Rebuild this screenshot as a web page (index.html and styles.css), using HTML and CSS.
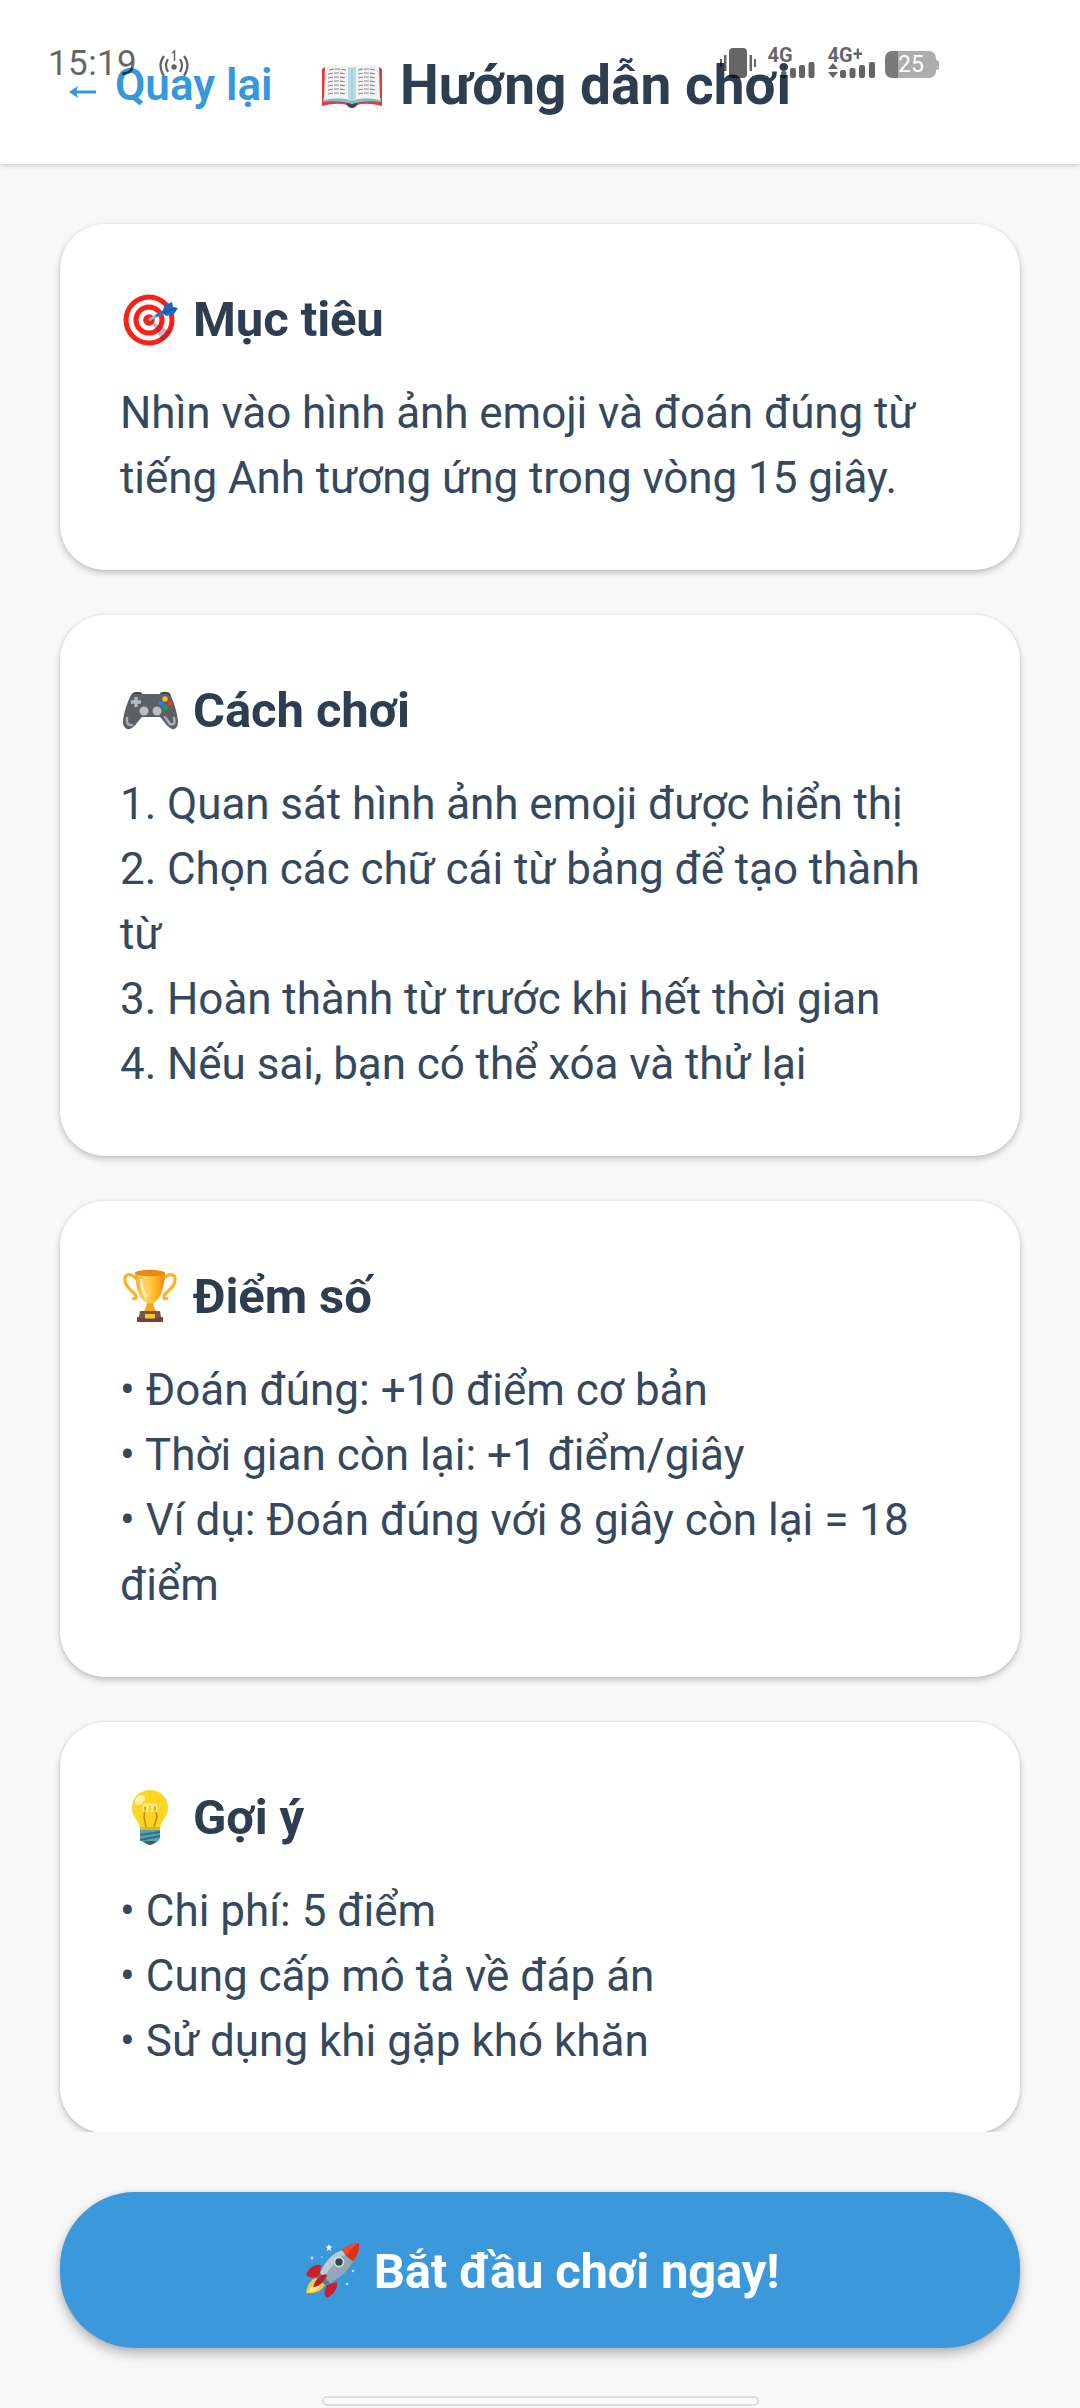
FILE: index.html
```html
<!DOCTYPE html>
<html lang="vi">
<head>
<meta charset="utf-8">
<title>Hướng dẫn chơi</title>
<link rel="stylesheet" href="styles.css">
</head>
<body>
<div class="screen">
  <header class="header">
    <a class="back"><svg class="arrow" viewBox="0 0 27 12"><path d="M0 6 9 0 7.500 4.400H27V7.600H7.500L9 12Z" fill="#3498db"/></svg><span>Quay lại</span></a>
    <h1 class="title"><svg class="book" viewBox="0 0 62 44">
      <path d="M1 5 4 3V37H58V3L61 5V42Q46 38 36 41Q31 46 26 41Q16 38 1 42Z" fill="#e53935"/>
      <path d="M2 34 9 32H53L60 34V38Q45 36 35 39Q31 43 27 39Q17 36 2 38Z" fill="#7dbccb"/>
      <path d="M4 2Q22-1 31 4V37Q20 32 3 36Z" fill="#f5f5f5"/><path d="M31 4Q40-1 58 2L59 36Q42 32 31 37Z" fill="#f1f3f4"/>
      <path d="M27 2.500 31 4 35 2.500V35L31 37 27 35Z" fill="#b9dbe6"/><path d="M31 4V37" stroke="#8bb7c6" stroke-width=".8"/>
      <path d="M8 6q8-2 17 0M7 10q9-2 18 0M7 14q9-2 18 0M7 18q9-2 18 0M7 22q9-2 18 0M7 26q9-2 18 0M7 30q9-2 18 0M37 6q8-2 17 0M37 10q9-2 18 0M37 14q9-2 18 0M37 18q9-2 18 0M37 22q9-2 18 0M37 26q9-2 18 0M37 30q9-2 18 0" fill="none" stroke="#8d8d8d" stroke-width="1.100" stroke-dasharray="5 1"/>
      <path d="M25 39Q31 39 31 41Q31 39 37 39Q35 44 31 44Q27 44 25 39Z" fill="#424242"/>
    </svg><span>Hướng dẫn chơi</span></h1>
  </header>

  <main class="content">
    <section class="card">
      <h2><svg class="emoji" viewBox="0 0 56 56">
        <circle cx="27" cy="29" r="25.500" fill="#fb1f18"/><circle cx="27" cy="29" r="20.500" fill="#fff"/><circle cx="27" cy="29" r="15.500" fill="#fb1f18"/><circle cx="27" cy="29" r="10.500" fill="#fff"/><circle cx="27" cy="29" r="5.800" fill="#ee2724"/>
        <path d="M29 30 49 41Q46 47 40 50Z" fill="#7a1f3c" opacity=".35"/>
        <path d="M27 29 43 20" stroke="#9fb3bd" stroke-width="3"/><path d="M34 25 43 20" stroke="#1976d2" stroke-width="3"/>
        <path d="M40 21 43 14 50 11 51 16 56 17 52 23 44 25Z" fill="#0b6dc9"/><path d="M41 22 54 17" stroke="#0a4f9c"/>
      </svg><span>Mục tiêu</span></h2>
      <p class="narrow">Nhìn vào hình ảnh emoji và đoán đúng từ tiếng Anh tương ứng trong vòng 15 giây.</p>
    </section>

    <section class="card">
      <h2><svg class="emoji" viewBox="0 0 56 56">
        <path d="M9 15Q9 10 15 10H17Q20 10 20 12H38Q38 10 41 10H44Q49 10 49 15Z" fill="#37474f"/>
        <path d="M9 13Q12 11 17 12H41Q46 11 49 14C53 23 56 34 56 41Q55 48 50 47C45 45 42 39 38 35H20C16 39 13 45 8 47Q2 48 1 41C1 34 4 23 9 13Z" fill="#596167"/>
        <path d="M5 36Q4 44 10 43M52 36Q54 44 48 42L43 35" fill="none" stroke="#a9aeb1" stroke-width="2.500" stroke-linecap="round"/>
        <path d="M14 15v10M9 20h10" stroke="#b7bbbd" stroke-width="3.300"/>
        <circle cx="22" cy="29" r="4.500" fill="#bdbdbd"/><circle cx="35" cy="29" r="4.500" fill="#bdbdbd"/>
        <circle cx="43" cy="17" r="2.700" fill="#ffc107"/><circle cx="39" cy="21" r="2.500" fill="#2979ff"/><circle cx="48" cy="21" r="2.500" fill="#e53935"/><circle cx="43" cy="25" r="2.600" fill="#18a153"/>
      </svg><span>Cách chơi</span></h2>
      <p class="narrow">1. Quan sát hình ảnh emoji được hiển thị<br>2. Chọn các chữ cái từ bảng để tạo thành từ<br>3. Hoàn thành từ trước khi hết thời gian<br>4. Nếu sai, bạn có thể xóa và thử lại</p>
    </section>

    <section class="card">
      <h2><svg class="emoji" viewBox="0 0 56 56">
        <defs><linearGradient id="gold"><stop stop-color="#f9a825"/><stop offset=".35" stop-color="#ffd36b"/><stop offset=".6" stop-color="#ffc12e"/><stop offset="1" stop-color="#f08c0a"/></linearGradient></defs>
        <path d="M15 11C8 4 2 6 3 13C4 21 12 23 14 28Q15 32 10 30M41 11C48 4 54 6 53 13C52 21 44 23 42 28Q41 32 46 30" fill="none" stroke="#fbb323" stroke-width="3.200"/>
        <path d="M25 32H31Q31 40 35 44H21Q25 40 25 32Z" fill="#f5a51c"/>
        <path d="M13 5Q14 27 23 34Q28 37 33 34Q42 27 43 5Z" fill="url(#gold)"/>
        <ellipse cx="28" cy="5" rx="15" ry="3.200" fill="#e58b13"/><path d="M19 11Q20 23 24 29" stroke="#ffedb1" stroke-width="3" fill="none"/>
        <path d="M18 43H38L39 49H41V54H15V49H17Z" fill="#795548"/><path d="M15 50H41V54H15Z" fill="#68463c"/><rect x="23" y="46" width="10" height="4.500" fill="#fcc23b"/>
      </svg><span>Điểm số</span></h2>
      <p>• Đoán đúng: +10 điểm cơ bản<br>• Thời gian còn lại: +1 điểm/giây<br>• Ví dụ: Đoán đúng với 8 giây còn lại = 18 điểm</p>
    </section>

    <section class="card">
      <h2><svg class="emoji" viewBox="0 0 56 56">
        <path d="M28 1C17 1 10 9 10 19C10 28 16 30 18 39H38C40 30 46 28 46 19C46 9 39 1 28 1Z" fill="#fdd522"/>
        <path d="M24 38 22 28 23 18M32 38 35 28 33 18" fill="none" stroke="#c98a0a" stroke-width="1.600"/>
        <path d="M22 23Q20 15 23 15T25 23Q25 15 28 15T30 23Q30 15 33 15T34 23" fill="none" stroke="#fff0a0" stroke-width="1.700"/>
        <ellipse cx="18" cy="11" rx="6" ry="4" fill="#fff0a3" transform="rotate(-42 18 11)"/>
        <path d="M18 38H38V49Q36 55 28 55T18 49Z" fill="#5c9eb1"/><path d="M18 38H38V41H18Z" fill="#d8b53b"/><path d="M18 46 38 43M18 51 38 47" stroke="#306f84" stroke-width="1.800"/><path d="M22 52H34Q31 56 28 56T22 52Z" fill="#455a64"/>
      </svg><span>Gợi ý</span></h2>
      <p>• Chi phí: 5 điểm<br>• Cung cấp mô tả về đáp án<br>• Sử dụng khi gặp khó khăn</p>
    </section>
  </main>

  <footer class="footer">
    <button class="start"><svg class="emoji" viewBox="0 0 56 56">
      <path d="M17 23Q7 21 2 33Q7 38 16 34ZM33 40Q34 50 23 56Q18 52 23 43Z" fill="#c9202b"/>
      <path d="M12 36Q4 38 2 51Q15 53 21 43Z" fill="#f9c846"/><path d="M11 41Q7 43 5 50Q13 49 16 44Z" fill="#fff08a"/>
      <path d="M40 8Q25 11 16 31L26 41Q45 31 50 17Z" fill="#90a9b5"/><path d="M40 8Q25 11 16 31L20 35Q32 17 43 11Z" fill="#b8ccd4"/><path d="M16 31 26 41 22 43 14 35Z" fill="#607d8b"/>
      <path d="M38 8Q46 1 55 1Q56 11 49 19Q44 17 38 8Z" fill="#dc3019"/><path d="M38 8Q46 1 55 1Q47 6 43 13Z" fill="#f04b31"/>
      <circle cx="35" cy="20" r="5.300" fill="#d5dfe3"/><circle cx="35" cy="20" r="3.700" fill="#37474f"/>
      <path d="M22 32Q12 34 9 45Q16 46 23 34Z" fill="#bd1e2b"/>
      <path d="m25 2 1 2.400 2.500.2-2 1.700.7 2.600L25 7.500l-2.200 1.400.7-2.600-2-1.700 2.500-.2Z" fill="#fff"/><circle cx="8" cy="16" r="1.400" fill="#bde7ff"/><circle cx="49" cy="29" r="1.300" fill="#bde7ff"/><circle cx="43" cy="42" r="1.300" fill="#bde7ff"/><circle cx="18" cy="15" r=".8" fill="#bde7ff"/>
    </svg><span>Bắt đầu chơi ngay!</span></button>
    <div class="home-bar"></div>
  </footer>

  <div class="status">
    <span class="clock">15:19</span>
    <svg class="hotspot" viewBox="0 0 32 30"><g fill="none" stroke="#000" stroke-width="2.200"><path d="M10 10Q6 16 10 23M6 7Q-1 16 6 27M22 10Q26 16 22 23M26 7Q33 16 26 27"/><path d="M14 4 16.500 2V12" stroke-width="1.500"/></g><circle cx="16" cy="18" r="2.700"/></svg>
    <svg class="indicators" viewBox="0 0 220 32">
      <rect x="9" y="1" width="18" height="30" rx="4"/><path d="M0 12h2v8h-2zM4 8h2.500v16H4zM29.500 8H32v16h-2.500zM34 12h2v8h-2z"/>
      <text class="net" x="47.500" y="15">4G</text><rect x="61" y="24" width="5.500" height="7" rx="2"/><rect x="70" y="21" width="6" height="10" rx="2"/><rect x="79" y="18" width="6" height="13" rx="2"/><rect x="88.500" y="15" width="6" height="16" rx="2"/>
      <text class="net" x="107.500" y="15">4G</text><path d="M133.500 5.500h3.200V1.500h2.200v4h3.200v2.400h-3.200v4h-2.200v-4h-3.200z"/><path d="m108 22 5-6 5 6zM108 25h10l-5 6z"/><rect x="120" y="23" width="6" height="8" rx="2"/><rect x="129.500" y="21" width="6" height="10" rx="2"/><rect x="139" y="18" width="6" height="13" rx="2"/><rect x="149" y="15" width="6" height="16" rx="2"/>
    </svg>
    <div class="battery"><span>25</span></div>
  </div>
</div>
</body>
</html>
```
FILE: styles.css
```css
* { box-sizing: border-box; }
body { margin: 0; font-family: Roboto, "Noto Sans", sans-serif; background: #f8f9fa; }
.screen { position: relative; display: flex; flex-direction: column; width: 1080px; height: 2408px; overflow: hidden; background: #f8f8f9; }
.header { position: relative; z-index: 1; flex: none; display: flex; align-items: flex-start; height: 164px; padding-left: 69px; background: #fff; box-shadow: 0 1px 5px rgba(0,0,0,.22); }
.back { display: flex; align-items: center; gap: 19px; width: 252px; padding-top: 59px; color: #3498db; font-size: 44px; font-weight: 600; line-height: 52px; white-space: nowrap; }
.arrow { width: 27px; height: 12px; margin-top: 13px; }
.title { display: flex; align-items: center; gap: 17px; margin: 0; padding-top: 53px; color: #2c3e50; font-size: 55px; font-weight: 700; line-height: 64px; white-space: nowrap; }
.book { width: 62px; height: 44px; margin-top: 1px; }
.content { flex: none; display: flex; flex-direction: column; gap: 45px; height: 1968px; padding: 60px 60px 0; overflow: hidden; }
.card { flex: none; padding: 61px 60px 59px; border-radius: 45px; background: #fff; box-shadow: 0 3px 6px rgba(0,0,0,.22), 0 0 3px rgba(0,0,0,.08); }
.card h2 { display: flex; align-items: center; gap: 15px; margin: 0 0 26px; padding-left: 2px; color: #2c3e50; font-size: 49px; font-weight: 700; line-height: 70px; letter-spacing: -.1px; }
.emoji { flex: none; width: 56px; height: 56px; margin-top: -2px; }
.card p { margin: 0; color: #34495e; font-size: 44px; line-height: 65px; }
.card .narrow { letter-spacing: -.07px; }
.footer { display: flex; flex-direction: column; align-items: center; padding: 60px 60px 0; }
.start { display: flex; flex: none; align-items: center; justify-content: center; gap: 14px; width: 960px; height: 156px; padding: 2px 0 0 3px; border: 0; border-radius: 75px; background: #3a98db; color: #fff; font-family: inherit; font-size: 49px; font-weight: 700; letter-spacing: -.18px; box-shadow: 0 6px 12px rgba(0,0,0,.27), 0 0 5px rgba(0,0,0,.08); }
.home-bar { flex: none; width: 437px; height: 10px; margin-top: 48px; border: 2px solid #dedede; border-radius: 5px; background: #fafafa; }
.status { position: absolute; z-index: 2; top: 0; left: 0; display: flex; align-items: flex-start; width: 1080px; padding: 47px 0 0 48px; opacity: .6; }
.clock { width: 110px; padding-top: 1px; font-size: 35px; line-height: 32px; letter-spacing: .4px; }
.hotspot { width: 32px; height: 30px; margin-top: 2px; }
.indicators { width: 220px; height: 32px; margin-left: 530px; overflow: visible; }
.net { font-size: 20px; font-weight: 700; }
.battery { position: relative; width: 51px; height: 27px; margin: 4px 0 0 -55px; border-radius: 7px; background: linear-gradient(90deg, #222 13px, #777 13px); color: #fff; font-size: 23px; line-height: 27px; padding-left: 13px; }
.battery::after { content: ""; position: absolute; left: 51px; top: 9px; width: 3px; height: 10px; border-radius: 0 3px 3px 0; background: #777; }
```
